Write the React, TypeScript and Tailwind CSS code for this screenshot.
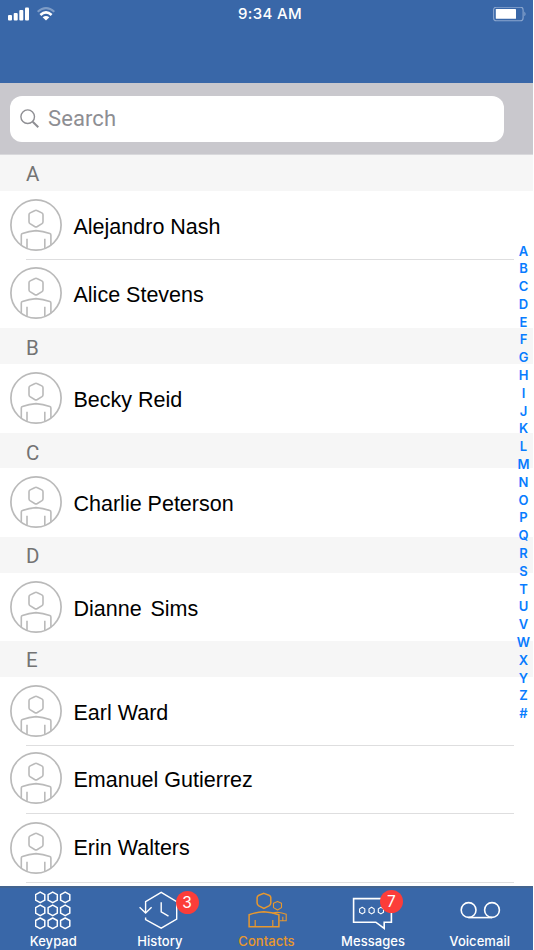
import React from "react";

type Contact = {
  name: string;
  height: string;
  avatar: string;
  label: string;
  divider?: boolean;
};

type Section = {
  letter: string;
  height: string;
  contacts: Contact[];
};

const sections: Section[] = [
  {
    letter: "A",
    height: "h-9 pt-[2px]",
    contacts: [
      { name: "Alejandro Nash", height: "h-[69px]", avatar: "pt-2", label: "pt-5", divider: true },
      { name: "Alice Stevens", height: "h-[68px]", avatar: "pt-[7px]", label: "pt-[19px]" },
    ],
  },
  {
    letter: "B",
    height: "h-9 pt-[4px]",
    contacts: [
      { name: "Becky Reid", height: "h-[69px]", avatar: "pt-2", label: "pt-5" },
    ],
  },
  {
    letter: "C",
    height: "h-[35px] pt-[5px]",
    contacts: [
      { name: "Charlie Peterson", height: "h-[69px]", avatar: "pt-2", label: "pt-5" },
    ],
  },
  {
    letter: "D",
    height: "h-9 pt-[2px]",
    contacts: [
      { name: "Dianne\u00a0 Sims", height: "h-[68px]", avatar: "pt-2", label: "pt-5 [word-spacing:-1.6px]" },
    ],
  },
  {
    letter: "E",
    height: "h-9 pt-[2px]",
    contacts: [
      { name: "Earl Ward", height: "h-[69px]", avatar: "pt-2", label: "pt-5", divider: true },
      { name: "Emanuel Gutierrez", height: "h-[68px]", avatar: "pt-[6px]", label: "pt-[18px]", divider: true },
      { name: "Erin Walters", height: "h-[69px]", avatar: "pt-2", label: "pt-[18px]", divider: true },
    ],
  },
];

const indexLetters = "ABCDEFGHIJKLMNOPQRSTUVWXYZ#".split("");

const Avatar = () => (
  <svg width="52" height="52" viewBox="0 0 52 52" fill="none" stroke="#bababa" className="shrink-0">
    <circle cx="26" cy="26" r="25.1" strokeWidth="1.7" />
    <path
      d="M24.6 11.7 Q26 10.9 27.4 11.7 L31.8 13.9 Q33 14.6 33 15.8 V22.8 Q33 24 32 24.7 L27.4 27.5 Q26 28.3 24.6 27.5 L20 24.7 Q19 24 19 22.8 V15.8 Q19 14.6 20.2 13.9 Z"
      strokeWidth="1.6"
    />
    <path d="M11.3 46.5 V36 Q11.3 35 12.4 34.6 Q19 32 26 31.6 Q33 32 39.8 34.6 Q40.9 35 40.9 36 V46.5" strokeWidth="1.6" />
    <path d="M17 39.8 V49.3 M34.8 39.8 V49.3" strokeWidth="1.6" />
  </svg>
);

const StatusBar = () => (
  <div className="flex h-7 items-center pl-2 pr-[7px]">
    <div className="flex flex-1 items-center gap-2">
      <svg width="21" height="14" viewBox="0 0 21 14" fill="#fff">
        <rect x="0" y="8" width="4" height="5.5" rx="1" />
        <rect x="5.7" y="6" width="4" height="7.5" rx="1" />
        <rect x="11.3" y="3" width="4" height="10.5" rx="1" />
        <rect x="17" y="0.5" width="4" height="13" rx="1" />
      </svg>
      <svg width="18" height="14" viewBox="0 0 18 14" fill="none" stroke="#fff">
        <path d="M.6 4.8 Q9 -2.6 17.4 4.8" strokeWidth="2.1" opacity=".35" />
        <path d="M3.4 8 Q9 2.7 14.6 8" strokeWidth="2.6" />
        <path d="M9 13.4 L5.6 10.3 Q9 7.6 12.4 10.3 Z" fill="#fff" stroke="none" />
      </svg>
    </div>
    <span className="pl-[6px] text-[15px] font-medium leading-7 tracking-[0.35px] text-white">9:34 AM</span>
    <div className="flex flex-1 justify-end">
      <svg width="33" height="15" viewBox="0 0 33 15" fill="none">
        <rect x=".6" y=".1" width="29.5" height="13.6" rx="2.8" stroke="#8ba6ce" strokeWidth="1.1" />
        <rect x="2.8" y="2" width="20.2" height="9.8" rx=".6" fill="#fff" />
        <path d="M31.4 4.5 Q33.7 6.9 31.4 9.3 Z" fill="#8ba6ce" />
      </svg>
    </div>
  </div>
);

const KeypadIcon = () => (
  <svg width="36" height="40" viewBox="0 0 36 40" fill="none" stroke="#fff" strokeWidth="1.5" strokeLinejoin="round">
    {[6.4, 19.4, 32.3].map((y) =>
      [5.2, 17.7, 30.2].map((x) => (
        <path key={`${x}-${y}`} d={`M${x} ${y - 5.3} l4.6 2.5 v5.6 l-4.6 2.5 l-4.6 -2.5 v-5.6 Z`} />
      )),
    )}
  </svg>
);

const HistoryIcon = () => (
  <svg width="42" height="40" viewBox="0 0 42 40" fill="none" stroke="#fff" strokeWidth="1.4">
    <path d="M6.6 21.5 V10.6 L22.2 1.4 L37.7 10.6 V28.2 L22.2 37.2 L6.6 28.6 V26.5" />
    <path d="M.6 16.2 L6.6 22 L12.6 16.2" />
    <path d="M22.2 11.2 V20.8 L29.5 25.2" />
  </svg>
);

const ContactsIcon = () => (
  <svg width="40" height="38" viewBox="0 0 40 38" fill="none" stroke="#e8982e" strokeWidth="1.5">
    <path d="M15.9 1.4 L21 3.2 Q22.8 4 22.8 5.6 V11 Q22.7 12.8 21 13.8 L15.9 16.4 L10.9 13.8 Q9.1 12.8 9.1 11 V5.6 Q9.2 4 10.9 3.2 Z" />
    <path d="M1.1 34.7 V22.8 Q8 20.2 15.9 19.8 Q24 20.2 30.9 22.8 V34.7 Z" />
    <path d="M7.2 28 V34.5 M24.8 28 V34.5" strokeWidth="1.2" />
    <path d="M29.5 9.4 L33.5 11.2 V15.6 L29.5 18 L25.5 15.6 V11.2 Z" strokeWidth="1.1" strokeLinejoin="round" />
    <path d="M24.5 21.2 Q27 20.4 29.5 20.2 Q34 20.6 38.2 22.2 V28.7 H31.5 M34.8 24.8 V28.5" strokeWidth="1.1" />
  </svg>
);

const MessagesIcon = () => (
  <svg width="42" height="34" viewBox="0 0 42 34" fill="none" stroke="#fff" strokeWidth="1.6">
    <path d="M1.6 1.6 H39.4 V25.2 H32.2 V31.4 L23.8 25.2 H1.6 Z" />
    {[10.2, 19.6, 28.9].map((x) => (
      <path
        key={x}
        d={`M${x} 10.3 l2.6 1.6 v3.4 l-2.6 1.6 l-2.6 -1.6 v-3.4 Z`}
        strokeWidth="1.1"
        strokeLinejoin="round"
      />
    ))}
  </svg>
);

const VoicemailIcon = () => (
  <svg width="42" height="19" viewBox="0 0 42 19" fill="none" stroke="#fff" strokeWidth="1.6">
    <circle cx="8.6" cy="9" r="7.4" />
    <circle cx="32" cy="9" r="7.4" />
    <path d="M8.6 16.6 H32" />
  </svg>
);

const tabs = [
  { label: "Keypad", icon: <KeypadIcon />, offset: "pt-[3px]" },
  { label: "History", icon: <HistoryIcon />, offset: "pt-[3px]", badge: "3", badgePlace: "left-[69px] top-[3px]" },
  { label: "Contacts", icon: <ContactsIcon />, offset: "pt-1 pl-1", active: true },
  { label: "Messages", icon: <MessagesIcon />, offset: "pt-[9px]", badge: "7", badgePlace: "left-[60px] top-[2px]" },
  { label: "Voicemail", icon: <VoicemailIcon />, offset: "pt-[13px] pl-[3px]" },
];

const App = () => {
  return (
    <div className="h-[950px] w-[534px] overflow-hidden bg-white font-['Inter',sans-serif]">
      <div className="relative flex h-full w-[533px] flex-col">
        <header className="h-[83px] bg-[#3967a8]">
          <StatusBar />
        </header>

        {/* Search */}
        <div className="h-[72px] border-b border-[#d9d9dc] bg-[#c9c8cd] pl-[10px] pt-[13px]">
          <div className="flex h-[46px] w-[494px] items-center rounded-[12px] bg-white pl-[10px]">
            <svg width="20" height="20" viewBox="0 0 20 20" fill="none" stroke="#8e8e93" strokeWidth="1.4">
              <circle cx="7.7" cy="7.7" r="6.8" />
              <path d="M12.7 12.7 L18.3 18.3" strokeWidth="2" />
            </svg>
            <span className="pl-[8px] font-['Roboto',sans-serif] text-[22px] leading-7 tracking-[0.1px] text-[#8e8e93]">
              Search
            </span>
          </div>
        </div>

        {/* Contact list */}
        <main className="h-[731px] overflow-hidden">
          {sections.map((section) => (
            <section key={section.letter}>
              <h2
                className={`flex items-center bg-[#f6f6f6] pl-[26px] font-['Roboto',sans-serif] text-[20.5px] leading-none text-[#737373] ${section.height}`}
              >
                {section.letter}
              </h2>
              {section.contacts.map((contact) => (
                <div key={contact.name} className={`flex flex-col ${contact.height}`}>
                  <div className="flex min-h-0 flex-1 items-start pl-[10px]">
                    <div className={contact.avatar}>
                      <Avatar />
                    </div>
                    <span
                      className={`pl-[11.5px] font-['Liberation_Sans',Arial,sans-serif] text-[21.5px] leading-8 text-black ${contact.label}`}
                    >
                      {contact.name}
                    </span>
                  </div>
                  {contact.divider && <div className="ml-[26px] mr-[19px] h-px shrink-0 bg-[#dededf]" />}
                </div>
              ))}
            </section>
          ))}
        </main>

        {/* Alphabet index floats over the list */}
        <div className="absolute right-0 top-[241.5px] flex w-[19px] flex-col items-center text-[13px] font-semibold text-[#087cff]">
          {indexLetters.map((letter) => (
            <span key={letter} className="h-[17.8px] leading-[18px]">
              {letter}
            </span>
          ))}
        </div>

        <nav className="grid h-16 grid-cols-5 border-t-2 border-[#43648f] bg-[#3967a8]">
          {tabs.map((tab) => (
            <div
              key={tab.label}
              className={`relative flex flex-col items-center ${tab.active ? "text-[#e8982e]" : "text-white"}`}
            >
              <div className={`flex h-[45px] items-start ${tab.offset}`}>{tab.icon}</div>
              <span className="text-[13px] font-medium leading-4 tracking-[0.05px]">{tab.label}</span>
              {tab.badge && (
                <span
                  className={`absolute flex size-[23px] items-center justify-center rounded-full bg-[#fc3d39] text-[15.5px] text-white ${tab.badgePlace}`}
                >
                  {tab.badge}
                </span>
              )}
            </div>
          ))}
        </nav>
      </div>
    </div>
  );
};

export default App;
